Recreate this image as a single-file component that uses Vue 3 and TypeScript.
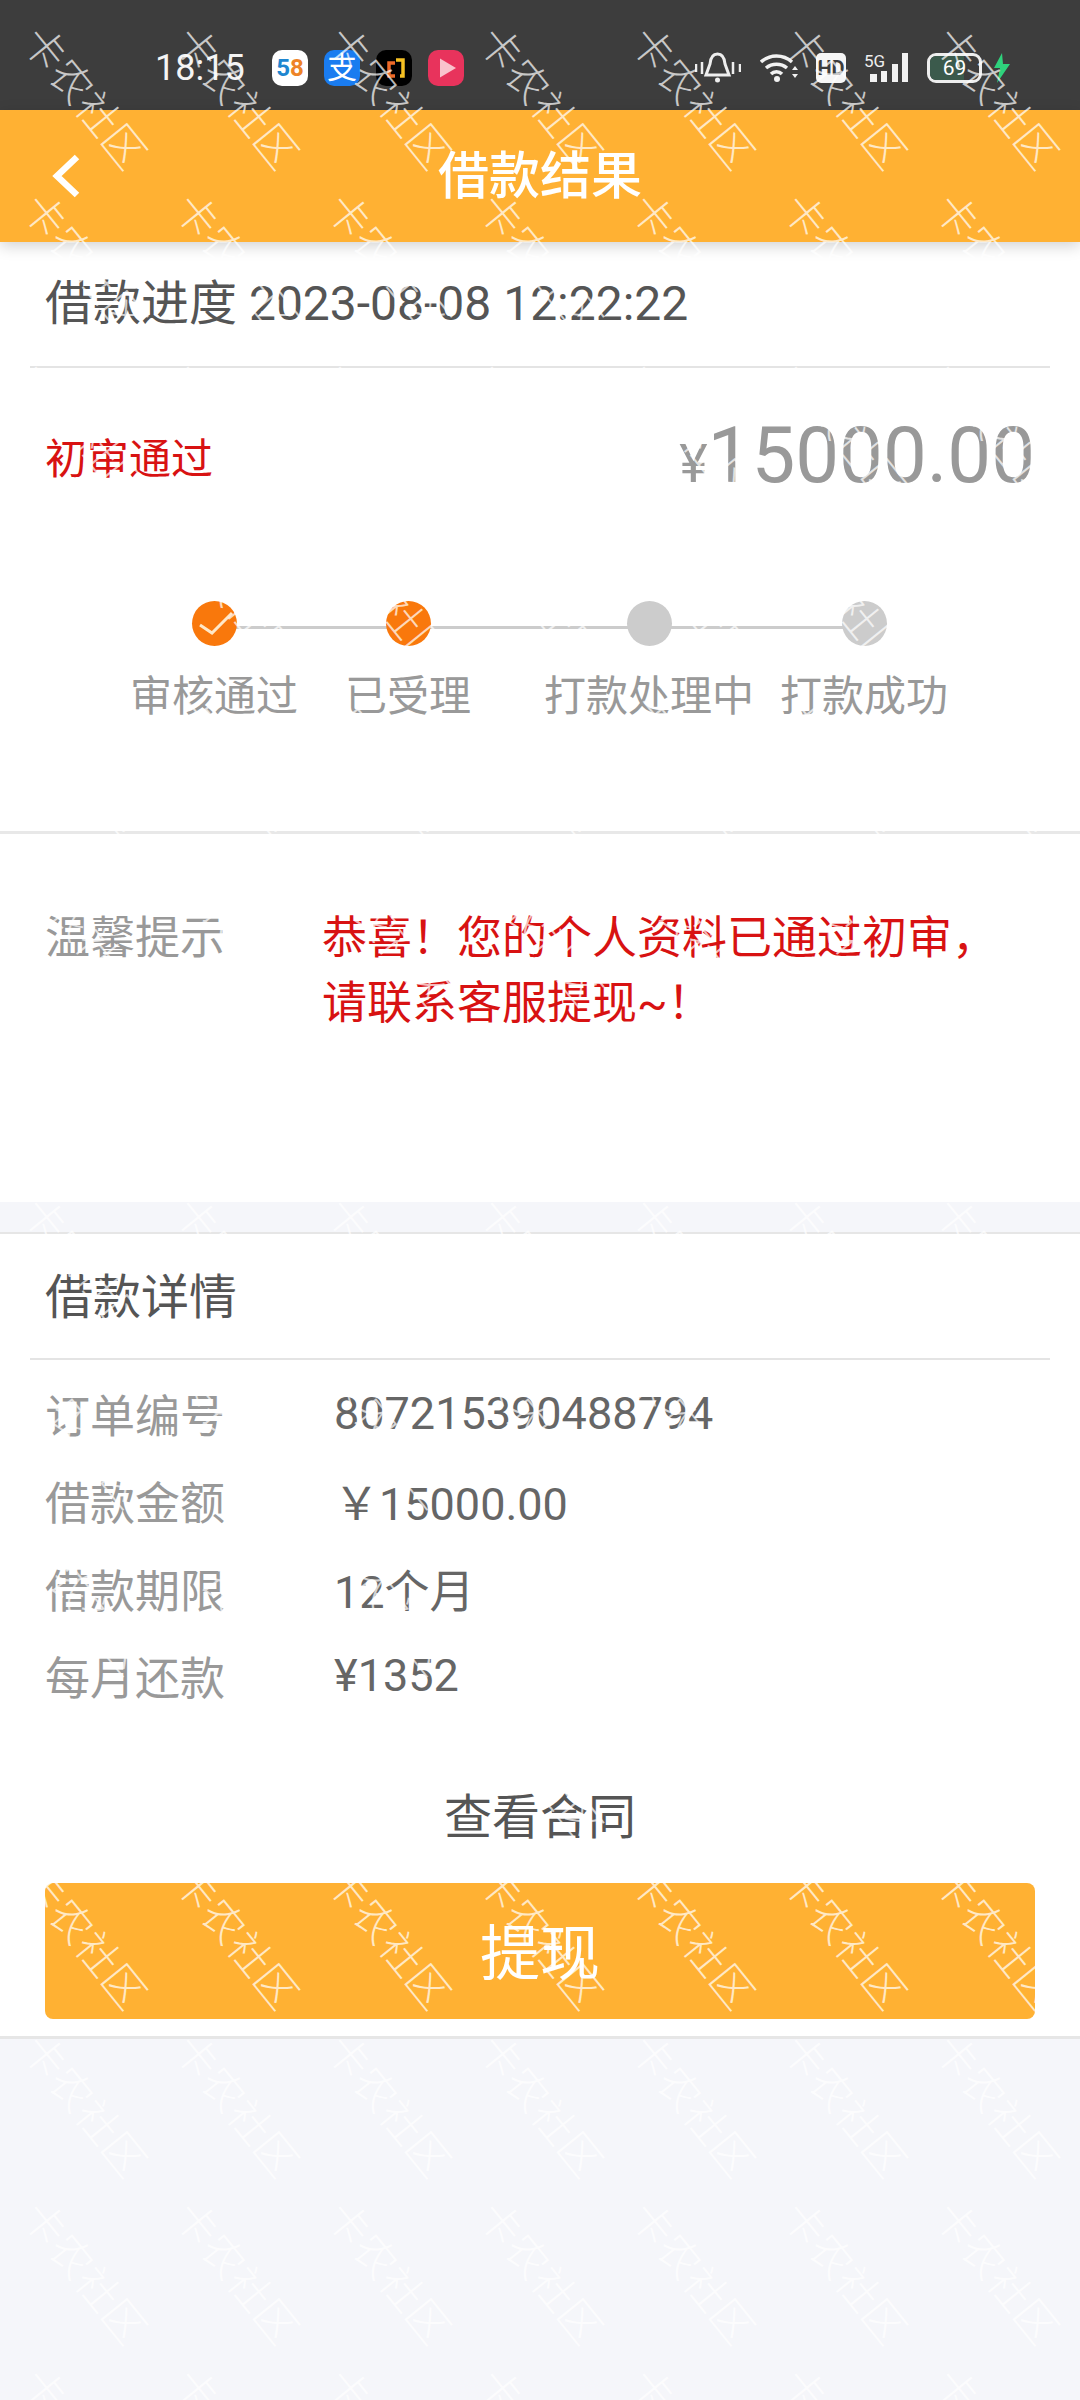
<script setup lang="ts">
const steps = [
  { label: '审核通过', active: true, check: true },
  { label: '已受理', active: true, check: false },
  { label: '打款处理中', active: false, check: false },
  { label: '打款成功', active: false, check: false }
]

const details = [
  { key: '订单编号', value: '807215390488794' },
  { key: '借款金额', value: '￥15000.00' },
  { key: '借款期限', value: '12个月' },
  { key: '每月还款', value: '¥1352' }
]

// watermark tiles that cover the page
const marks = Array.from({ length: 7 * 15 }, (_, i) => i)
</script>

<template>
  <div class="page">
    <div class="status">
      <span class="time">18:15</span>
      <div class="apps">
        <div class="app app-58"><b class="five">5</b><b class="eight">8</b></div>
        <div class="app app-ali">支</div>
        <div class="app app-black">
          <svg width="36" height="36" viewBox="0 0 36 36">
            <path d="M20 10h7v16h-3" fill="none" stroke="#f5c023" stroke-width="3.5" />
            <path d="M19 13h-6v13h6" fill="none" stroke="#ee6a28" stroke-width="3.5" />
          </svg>
        </div>
        <div class="app app-play">
          <svg width="36" height="36" viewBox="0 0 36 36">
            <path d="M12 8.5v19l16-9.5z" fill="#f9c3cd" />
          </svg>
        </div>
      </div>
      <div class="sys">
        <svg class="bell" width="46" height="34" viewBox="0 0 46 34">
          <path d="M1 13v8M7 11v12M38 11v12M45 13v8" stroke="#eee" stroke-width="2.5" fill="none" />
          <path d="M22.500 3c-5 0-7 4-7.500 10l-4 11h23l-4-11c-.5-6-2.500-10-7.500-10z" fill="none" stroke="#eee" stroke-width="3" />
          <circle cx="22.500" cy="29" r="2.500" fill="#eee" />
        </svg>
        <svg class="wifi" width="40" height="30" viewBox="0 0 40 30">
          <path d="M1 9c9-8 22-8 31 0M6 15c6-5 15-5 21 0M11 21c3-3 8-3 11 0" fill="none" stroke="#f2f2f2" stroke-width="3.500" />
          <circle cx="17" cy="26" r="3" fill="#f2f2f2" />
          <path d="M35 13l3 4h-6zM35 25l3-4h-6z" fill="#f2f2f2" />
        </svg>
        <div class="hd">HD</div>
        <div class="signal">
          <span class="g5">5G</span>
          <svg width="38" height="30" viewBox="0 0 38 30">
            <path d="M0 21h7v8H0zM11 18h6v11h-6zM22 11h6v18h-6zM32 0h6v29h-6z" fill="#f2f2f2" />
          </svg>
        </div>
        <div class="battery"><i class="level" /><span>69</span></div>
        <svg class="bolt" width="18" height="30" viewBox="0 0 18 30">
          <path d="M10 0L2 15h6l-3 15 13-19h-7z" fill="#2fd27c" />
        </svg>
      </div>
    </div>

    <header class="nav">
      <svg class="back" width="30" height="44" viewBox="0 0 30 44">
        <path d="M26 3L6 22l20 19" fill="none" stroke="#fff" stroke-width="6.500" />
      </svg>
      <h1>借款结果</h1>
    </header>

    <section class="card first">
      <div class="head">借款进度 2023-08-08 12:22:22</div>
      <div class="summary">
        <span class="state">初审通过</span>
        <span class="amount"><small>¥</small>15000.00</span>
      </div>
      <div class="steps">
        <div
          v-for="s in steps"
          :key="s.label"
          class="step"
        >
          <span class="dot" :class="{ on: s.active }">
            <svg v-if="s.check" width="45" height="45" viewBox="0 0 45 45">
              <path d="M8 24l12 8 20-20" fill="none" stroke="#ffe8c8" stroke-width="3" />
            </svg>
          </span>
          <span class="step-label">{{ s.label }}</span>
        </div>
      </div>
    </section>

    <section class="tip">
      <span class="tip-key">温馨提示</span>
      <p class="tip-text">恭喜！您的个人资料已通过初审，<br>请联系客服提现~！</p>
    </section>

    <section class="card second">
      <div class="head">借款详情</div>
      <div class="rows">
        <div
          v-for="d in details"
          :key="d.key"
          class="row"
        >
          <span class="row-key">{{ d.key }}</span>
          <span class="row-value">{{ d.value }}</span>
        </div>
      </div>
      <div class="contract">查看合同</div>
      <button class="submit">提现</button>
    </section>

    <div class="watermark">
      <span v-for="m in marks" :key="m" class="mark"><span>卡农社区</span></span>
    </div>
  </div>
</template>

<style scoped>
.page {
  position: relative;
  width: 1080px;
  height: 2400px;
  overflow: hidden;
  background: #f5f6fa;
  font-family: Roboto, "Noto Sans CJK SC", sans-serif;
}

.status {
  height: 110px;
  background: #3d3d3d;
  display: flex;
  align-items: center;
  padding: 25px 0 0 155px;
  box-sizing: border-box;
  color: #f4f4f4;
}
.time {
  font-size: 36px;
  width: 117px;
  line-height: 36px;
}
.apps {
  display: flex;
  gap: 16px;
}
.app {
  width: 36px;
  height: 36px;
  border-radius: 10px;
  overflow: hidden;
  display: flex;
  align-items: center;
  justify-content: center;
}
.app-58 {
  background: #fff;
  font-size: 24px;
  line-height: 36px;
}
.five { color: #1e86d0; font-weight: 700; }
.eight { color: #ee8427; font-weight: 700; }
.app-ali {
  background: #1a7cf0;
  color: #fff;
  font-size: 30px;
  line-height: 36px;
}
.app-black {
  background: #000;
}
.app-play {
  background: #e8335c;
}

.sys {
  display: flex;
  align-items: center;
  margin-left: 231px;
}
.bell { margin-right: 19px; }
.wifi { margin-right: 16px; }
.hd {
  width: 30px;
  height: 30px;
  background: #f6f6f6;
  color: #3d3d3d;
  border-radius: 5px;
  font-size: 20px;
  font-weight: 700;
  line-height: 30px;
  text-align: center;
  margin-right: 18px;
}
.signal {
  position: relative;
  width: 44px;
  height: 30px;
  display: flex;
  justify-content: flex-end;
  margin-right: 19px;
}
.g5 {
  position: absolute;
  left: 0;
  top: -1px;
  font-size: 17px;
  line-height: 18px;
  color: #eee;
}
.battery {
  position: relative;
  width: 55px;
  height: 30px;
  box-sizing: border-box;
  border: 3px solid #eee;
  border-radius: 9px;
  overflow: hidden;
  display: flex;
  align-items: center;
  justify-content: center;
  font-size: 21px;
  color: #fff;
  margin-right: 10px;
}
.level {
  position: absolute;
  left: 0;
  top: 0;
  bottom: 0;
  width: 69%;
  background: #3b5a4c;
}
.battery span { position: relative; }

.nav {
  position: relative;
  z-index: 1;
  height: 132px;
  background: #ffb133;
  box-shadow: 0 4px 14px rgba(0, 0, 0, .18);
  display: flex;
  align-items: center;
  justify-content: center;
}
.nav h1 {
  margin: 0 0 8px;
  font-size: 51px;
  font-weight: 500;
  color: #fff;
}
.back {
  position: absolute;
  left: 51px;
  top: 44px;
}

.card {
  background: #fff;
}
.first {
  height: 589px;
  border-bottom: 3px solid #e8e8e8;
  box-sizing: content-box;
}
.head {
  height: 126px;
  margin: 0 30px;
  padding: 0 15px 6px;
  box-sizing: border-box;
  border-bottom: 2px solid #e4e4e4;
  display: flex;
  align-items: center;
  font-size: 48px;
  color: #555;
}
.first .head {
  padding-bottom: 10px;
}
.summary {
  height: 180px;
  padding: 0 45px;
  display: flex;
  align-items: center;
  justify-content: space-between;
}
.state {
  margin-bottom: 6px;
  font-size: 42px;
  color: #d81212;
}
.amount {
  margin-top: 4px;
  font-size: 78px;
  color: #999;
  line-height: 76px;
}
.amount small {
  font-size: 54px;
}

.steps {
  position: relative;
  display: flex;
  padding: 53px 0 0 109px;
}
.steps::before {
  content: "";
  position: absolute;
  left: 214px;
  width: 650px;
  top: 78px;
  height: 3px;
  background: #cccccc;
}
.step {
  position: relative;
  display: flex;
  flex-direction: column;
  align-items: center;
  white-space: nowrap;
}
.step:nth-child(1) { width: 210px; }
.step:nth-child(2) { width: 178px; }
.step:nth-child(3) { width: 304px; }
.step:nth-child(4) { width: 126px; }
.dot {
  width: 45px;
  height: 45px;
  border-radius: 50%;
  background: #cccccc;
  display: block;
}
.dot.on {
  background: #f9780c;
}
.step-label {
  margin-top: 26px;
  font-size: 42px;
  line-height: 50px;
  color: #999;
}

.tip {
  background: #fff;
  height: 368px;
  padding-top: 72px;
  box-sizing: border-box;
  display: flex;
  align-items: flex-start;
}
.tip-key {
  width: 322px;
  padding-left: 45px;
  box-sizing: border-box;
  font-size: 45px;
  line-height: 65px;
  color: #999;
}
.tip-text {
  margin: 0;
  font-size: 45px;
  line-height: 65px;
  color: #d81212;
}

.second {
  margin-top: 30px;
  border-top: 2px solid #e6e6e6;
  border-bottom: 3px solid #e6e6e6;
  height: 802px;
}
.rows {
  padding-top: 10px;
}
.row {
  height: 87.300px;
  padding-left: 45px;
  display: flex;
  align-items: center;
  font-size: 45px;
}
.row-key {
  width: 289px;
  color: #999;
}
.row-value {
  color: #666;
}
.contract {
  margin-top: 69px;
  text-align: center;
  font-size: 48px;
  line-height: 60px;
  color: #555;
}
.submit {
  display: block;
  width: 990px;
  height: 136px;
  margin: 35px 0 0 45px;
  padding: 0 0 6px;
  border: 0;
  border-radius: 8px;
  background: #ffb133;
  color: #fff;
  font-family: inherit;
  font-size: 60px;
}

.watermark {
  position: absolute;
  z-index: 2;
  inset: 0;
  padding: 12px 0 0 11px;
  display: grid;
  grid-template-columns: repeat(7, 152px);
  grid-auto-rows: 167.300px;
  pointer-events: none;
}
.mark {
  display: flex;
  align-items: center;
  justify-content: center;
  font-size: 42px;
  font-weight: 300;
  white-space: nowrap;
  color: rgba(255, 255, 255, .72);
}
.mark span {
  display: block;
  transform: rotate(51deg);
}
</style>

<style>
html, body {
  margin: 0;
  background: #f5f6fa;
}
</style>
